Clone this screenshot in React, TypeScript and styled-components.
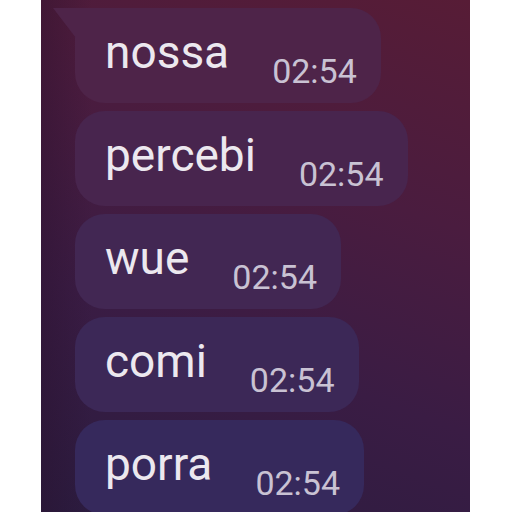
import React from "react";
import styled, { createGlobalStyle } from "styled-components";

const Global = createGlobalStyle`
  html, body { margin: 0; padding: 0; background: #ffffff; }
  body { width: 512px; height: 512px; overflow: hidden; }
`;

const Page = styled.div`
  width: 512px;
  height: 512px;
  display: flex;
  justify-content: center;
  background: #ffffff;
`;

const Screen = styled.div`
  width: 429px;
  margin-left: 41px;
  margin-right: 42px;
  height: 512px;
  overflow: hidden;
  background:
    linear-gradient(90deg, rgba(40, 14, 40, 0.35) 0%, rgba(40, 14, 40, 0) 12%),
    linear-gradient(200deg, #571c36 0%, #4a1c3f 35%, #3a1c44 65%, #2b1c40 100%);
`;

const List = styled.div`
  display: flex;
  flex-direction: column;
  align-items: flex-start;
  gap: 8px;
  padding: 8px 0 0 34px;
`;

const Bubble = styled.div<{ $first?: boolean; $tone: number }>`
  position: relative;
  display: flex;
  align-items: flex-start;
  gap: 43px;
  padding: 17px 24px 15px 30px;
  border-radius: ${(p) => (p.$first ? "0 30px 30px 30px" : "30px")};
  background: ${(p) =>
    `color-mix(in srgb, #4e2449 ${100 - p.$tone}%, #36295c ${p.$tone}%)`};

  &::before {
    content: "";
    display: ${(p) => (p.$first ? "block" : "none")};
    position: absolute;
    left: -22px;
    top: 0;
    width: 23px;
    height: 30px;
    background: #4e2449;
    clip-path: polygon(0 0, 100% 0, 100% 100%);
  }
`;

const Text = styled.span`
  font-family: Roboto, "Noto Sans", sans-serif;
  font-size: 46px;
  line-height: 54px;
  color: #ece8ef;
`;

const Time = styled.span`
  font-family: Roboto, "Noto Sans", sans-serif;
  font-size: 34px;
  line-height: 34px;
  margin-top: 29px;
  color: #c9c2d3;
`;

const messages = ["nossa", "percebi", "wue", "comi", "porra"];

export default function App() {
  return (
    <Page>
      <Global />
      <Screen>
        <List>
          {messages.map((m, i) => (
            <Bubble key={m} $first={i === 0} $tone={i * 25}>
              <Text>{m}</Text>
              <Time>02:54</Time>
            </Bubble>
          ))}
        </List>
      </Screen>
    </Page>
  );
}
